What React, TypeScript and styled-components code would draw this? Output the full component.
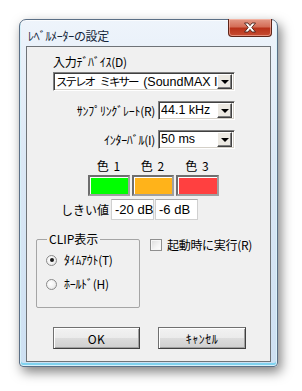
import React from 'react'
import styled, { createGlobalStyle } from 'styled-components'

const GlobalStyle = createGlobalStyle`
  html, body {
    margin: 0;
    padding: 0;
    background: #ffffff;
  }
  body {
    font-family: "Noto Sans CJK JP", "DejaVu Sans", sans-serif;
    font-size: 12px;
    color: #000000;
  }
`

const Page = styled.div`
  width: 302px;
  height: 391px;
  padding: 19px 0 0 19px;
  box-sizing: border-box;
`

const Frame = styled.div`
  width: 259px;
  height: 348px;
  box-sizing: border-box;
  border: 1px solid #5b6f86;
  border-radius: 7px 7px 4px 4px;
  background: linear-gradient(180deg, #eef4fb 0%, #dbe8f5 40%, #cde0f2 100%);
  box-shadow: 3px 5px 12px rgba(0, 0, 0, 0.5), inset 0 0 0 1px rgba(255, 255, 255, 0.7),
    inset 0 -2px 0 1px #7fd2ef;
  display: flex;
  flex-direction: column;
  padding: 0 6px 4px 6px;
`

const TitleBar = styled.div`
  height: 26px;
  display: flex;
  align-items: flex-start;
  justify-content: space-between;
`

const Title = styled.div`
  margin: 10px 0 0 2px;
  font-size: 12px;
  line-height: 12px;
  color: #15263a;
  letter-spacing: -0.3px;
`

const CloseButton = styled.div`
  width: 44px;
  height: 18px;
  margin-top: -1px;
  margin-right: -1px;
  box-sizing: border-box;
  border: 1px solid #5e2418;
  border-top: none;
  border-radius: 0 0 4px 4px;
  background: linear-gradient(180deg, #e39a88 0%, #d46e58 45%, #b8321a 55%, #c64d33 100%);
  box-shadow: inset 0 0 0 1px rgba(255, 200, 185, 0.55);
  display: flex;
  align-items: center;
  justify-content: center;
`

const Client = styled.div`
  flex: 1;
  background: #f0f0f0;
  border: 1px solid #6f7377;
  display: flex;
  flex-direction: column;
`

const Label = styled.div`
  font-size: 12px;
  line-height: 12px;
  white-space: nowrap;
  letter-spacing: -0.3px;
`

const DeviceBlock = styled.div`
  margin: 9px 0 0 26px;
  display: flex;
  flex-direction: column;
  gap: 4px;
`

const Combo = styled.div<{ $w: number }>`
  width: ${p => p.$w}px;
  height: 19px;
  box-sizing: border-box;
  border-top: 1px solid #808080;
  border-left: 1px solid #808080;
  border-right: 1px solid #ffffff;
  border-bottom: 1px solid #ffffff;
  box-shadow: inset 1px 1px 0 #404040, inset -1px -1px 0 #d4d0c8;
  background: #ffffff;
  display: flex;
  align-items: center;
  padding: 0 2px 0 2px;
`

const ComboText = styled.div`
  flex: 1;
  overflow: hidden;
  white-space: nowrap;
  font-family: "Liberation Sans", "Noto Sans CJK JP", sans-serif;
  font-size: 12.5px;
  line-height: 15px;
`

const Narrow = styled.span`
  font-family: "Noto Sans CJK JP", sans-serif;
  font-size: 11.5px;
  letter-spacing: -2px;
  word-spacing: 5px;
`

const DropButton = styled.div`
  width: 15px;
  height: 15px;
  box-sizing: border-box;
  background: #ece9e2;
  border-top: 1px solid #ffffff;
  border-left: 1px solid #ffffff;
  border-right: 1px solid #404040;
  border-bottom: 1px solid #404040;
  box-shadow: inset -1px -1px 0 #808080;
  display: flex;
  align-items: center;
  justify-content: center;
`

const Arrow = styled.div`
  width: 0;
  height: 0;
  border-left: 4px solid transparent;
  border-right: 4px solid transparent;
  border-top: 4px solid #000000;
  margin-top: 1px;
`

const FieldRow = styled.div<{ $top: number }>`
  margin-top: ${p => p.$top}px;
  display: flex;
  align-items: center;
  gap: 3px;
`

const RightLabel = styled(Label)`
  width: 128px;
  text-align: right;
`

const ColorGrid = styled.div`
  margin: 11px 0 0 61px;
  display: grid;
  grid-template-columns: 42px 42px 43px;
  column-gap: 2px;
  row-gap: 3px;
`

const ColorCaption = styled.div`
  text-align: center;
  font-size: 12px;
  line-height: 12px;
  letter-spacing: 1px;
`

const Swatch = styled.div<{ $color: string }>`
  height: 21px;
  box-sizing: border-box;
  border: 2px solid;
  border-color: #6e6e6e #a0a0a0 #a0a0a0 #6e6e6e;
  background: ${p => p.$color};
  box-shadow: inset 1px 1px 0 #ffffff;
`

const ThresholdRow = styled.div`
  margin: 3px 0 0 34px;
  display: flex;
  align-items: center;
`

const ThresholdLabel = styled(Label)`
  width: 50px;
  letter-spacing: 0px;
`

const Edit = styled.div`
  width: 43px;
  height: 21px;
  box-sizing: border-box;
  margin-right: 1px;
  background: #ffffff;
  border: 1px solid #d0d0d0;
  border-top-color: #a8a8a8;
  padding: 2px 2px 0 3px;
  font-family: "Liberation Sans", "Noto Sans CJK JP", sans-serif;
  font-size: 13px;
  line-height: 15px;
  white-space: nowrap;
`

const BottomRow = styled.div`
  margin: 13px 0 0 9px;
  display: flex;
  align-items: flex-start;
  gap: 10px;
`

const GroupBox = styled.fieldset`
  width: 104px;
  height: 75px;
  box-sizing: border-box;
  margin: 0;
  padding: 9px 0 0 9px;
  border: 1px solid #a5a5a5;
  border-radius: 2px;
  display: flex;
  flex-direction: column;
  gap: 12px;
`

const Legend = styled.legend`
  padding: 0 2px;
  margin-left: 1px;
  font-size: 12px;
  line-height: 12px;
`

const Option = styled.div`
  display: flex;
  align-items: center;
  gap: 7px;
`

const Radio = styled.div<{ $checked?: boolean }>`
  width: 11px;
  height: 11px;
  box-sizing: border-box;
  border-radius: 50%;
  border: 1px solid #8a8a8a;
  background: radial-gradient(circle at 40% 40%, #ffffff 0%, #f2f2f2 50%, #d8d8d8 100%);
  display: flex;
  align-items: center;
  justify-content: center;

  &::after {
    content: '';
    display: ${p => (p.$checked ? 'block' : 'none')};
    width: 4px;
    height: 4px;
    border-radius: 50%;
    background: #1a1a1a;
  }
`

const CheckOption = styled.div`
  margin-top: 6px;
  display: flex;
  align-items: center;
  gap: 5px;
`

const CheckBox = styled.div`
  width: 12px;
  height: 12px;
  box-sizing: border-box;
  border: 1px solid #8f8f8f;
  background: linear-gradient(135deg, #dcdcdc 0%, #f4f4f4 60%, #ffffff 100%);
  box-shadow: inset 0 0 0 1px #f6f6f6;
`

const ButtonRow = styled.div`
  margin: 19px 0 0 26px;
  display: flex;
  gap: 18px;
`

const Button = styled.div<{ $w: number }>`
  width: ${p => p.$w}px;
  height: 22px;
  box-sizing: border-box;
  border: 1px solid #707070;
  border-right-color: #404040;
  border-bottom-color: #404040;
  background: linear-gradient(180deg, #f2f2f2 0%, #ebebeb 50%, #dddddd 51%, #cfcfcf 100%);
  box-shadow: inset 1px 1px 0 #ffffff, inset -1px -1px 0 #a0a0a0;
  display: flex;
  align-items: center;
  justify-content: center;
  font-size: 12px;
  letter-spacing: 0.5px;
`

const swatches = [
  { label: '色 1', color: '#00ff00' },
  { label: '色 2', color: '#ffb31a' },
  { label: '色 3', color: '#ff4040' },
]

const ComboBox: React.FC<{ w: number; children: React.ReactNode }> = ({ w, children }) => (
  <Combo $w={w}>
    <ComboText>{children}</ComboText>
    <DropButton>
      <Arrow />
    </DropButton>
  </Combo>
)

const App: React.FC = () => {
  return (
    <Page>
      <GlobalStyle />
      <Frame>
        <TitleBar>
          <Title>ﾚﾍﾞﾙﾒｰﾀｰの設定</Title>
          <CloseButton>
            <svg width="16" height="11" viewBox="0 0 16 11">
              <path
                d="M2.5 1 L6 1 L8 3.6 L10 1 L13.5 1 L9.8 5.5 L13.5 10 L10 10 L8 7.4 L6 10 L2.5 10 L6.2 5.5 Z"
                fill="#ffffff"
                stroke="#4a2018"
                strokeWidth="0.9"
                strokeLinejoin="round"
              />
            </svg>
          </CloseButton>
        </TitleBar>
        <Client>
          <DeviceBlock>
            <Label>入力ﾃﾞﾊﾞｲｽ(D)</Label>
            <ComboBox w={182}>
              <Narrow>ステレオ ミキサー </Narrow>(SoundMAX I
            </ComboBox>
          </DeviceBlock>
          <FieldRow $top={10}>
            <RightLabel>ｻﾝﾌﾟﾘﾝｸﾞﾚｰﾄ(R)</RightLabel>
            <ComboBox w={77}>44.1 kHz</ComboBox>
          </FieldRow>
          <FieldRow $top={10}>
            <RightLabel>ｲﾝﾀｰﾊﾞﾙ(I)</RightLabel>
            <ComboBox w={77}>50 ms</ComboBox>
          </FieldRow>
          <ColorGrid>
            {swatches.map(s => (
              <ColorCaption key={s.label}>{s.label}</ColorCaption>
            ))}
            {swatches.map(s => (
              <Swatch key={s.color} $color={s.color} />
            ))}
          </ColorGrid>
          <ThresholdRow>
            <ThresholdLabel>しきい値</ThresholdLabel>
            <Edit>-20 dB</Edit>
            <Edit>-6 dB</Edit>
          </ThresholdRow>
          <BottomRow>
            <GroupBox>
              <Legend>CLIP表示</Legend>
              <Option>
                <Radio $checked />
                <Label>ﾀｲﾑｱｳﾄ(T)</Label>
              </Option>
              <Option>
                <Radio />
                <Label>ﾎｰﾙﾄﾞ(H)</Label>
              </Option>
            </GroupBox>
            <CheckOption>
              <CheckBox />
              <Label>起動時に実行(R)</Label>
            </CheckOption>
          </BottomRow>
          <ButtonRow>
            <Button $w={87}>OK</Button>
            <Button $w={88}>ｷｬﾝｾﾙ</Button>
          </ButtonRow>
        </Client>
      </Frame>
    </Page>
  )
}

export default App
